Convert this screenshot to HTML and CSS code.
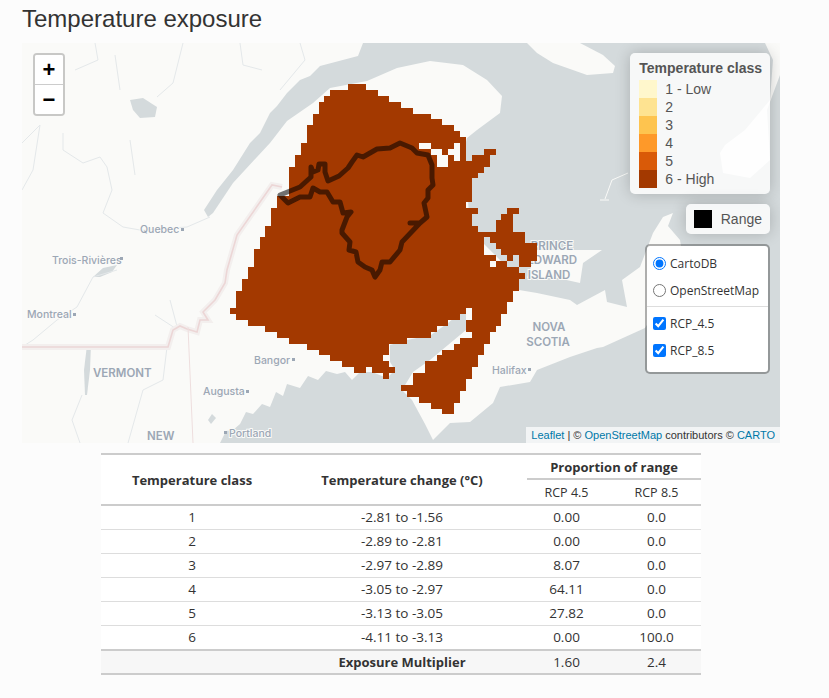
FILE: index.html
```html
<!DOCTYPE html>
<html lang="en">
  <head>
    <meta charset="UTF-8" />
    <meta name="viewport" content="width=device-width, initial-scale=1.0" />
    <title>Temperature exposure</title>
    <link rel="stylesheet" href="styles.css">
  </head>
  <body>
    <h2 class="page-title">Temperature exposure</h2>

    <div class="map">
      <svg class="map-canvas" viewBox="22 43 758 400" width="758" height="400">
        <!-- land -->
        <path class="land" d="M22 43H363L358 56L320 66L310 76L300 80L287 93L277 106L270 113L260 133L250 143L233 170L217 190L204 210L208 217L213 213L233 183L257 157L270 143L287 121L313 103L330 88L367 81L397 68L430 61L463 65L487 80L502 96L500 113L477 130L467 138L464 150L468 200L470 230L490 250L515 275L519 290L466 308L448 323L431 335L407 340L390 345L390 362L395 370L387 378L372 372L360 372L352 380L345 372L337 374L326 371L318 380L308 376L300 388L287 384L283 396L276 392L270 407L262 404L253 414L246 412L240 424L233 430L226 431L220 443H22Z" />
        <path class="land" d="M466 308L519 290L537 293L570 300L577 305L605 290L607 302L627 307L622 280L640 267L653 233L663 217L673 213L668 226L680 240L690 300L650 320L645 328L603 347L597 348L570 357L537 370L530 382L500 387L493 403L470 422L450 423L433 440L425 424L412 400L402 390L413 372L430 360L448 345L466 330Z" />
        <path class="land" d="M527 43L537 53L553 63L587 75L613 73L615 66L603 55L580 43Z" />
        <path class="land" d="M537 250L602 250L583 263L580 283L553 277L527 278Z" />
        <path class="land" d="M765 43L773 60L770 100L745 130L725 145L720 153L723 173L750 178L770 160L767 110L780 75V43Z" />
        <path class="islet" d="M628 173L612 180L605 199" />
        <path class="islet" d="M600 200H609" />
        <!-- lakes and rivers -->
        <path class="water" d="M130 100L143 98L157 107L155 117L140 118L133 110Z" />
        <path class="water" d="M93 277L103 268L117 265L112 272L100 277Z" />
        <path class="water" d="M87 345L91 344L90 370L87 395L85 395L84 370Z" />
        <path class="water" d="M212 414L216 418L211 424L208 420Z" />
        <path class="river" d="M157 97L173 83L183 43" />
        <path class="river" d="M63 133L63 150L83 163L100 157L107 167L112 190L103 213L123 227L140 230L187 227L210 217" />
        <path class="river" d="M117 270L93 277L77 307L57 320L33 340L22 347" />
        <path class="river" d="M167 347L163 380L143 390L128 443" />
        <path class="river" d="M82 395L72 420L80 443" />
        <path class="river" d="M22 143L40 125L33 170L22 190" />
        <path class="river" d="M95 43L98 60L75 70M115 55L120 90M130 140L135 175" />
        <path class="river" d="M155 315L178 330L170 300" />
        <path class="river" d="M300 43L305 60L280 90M240 43L243 65L262 70" />
        <!-- borders -->
        <path class="border-halo" d="M22 347H168L173 330L180 326L187 329L197 332L200 320L208 320L203 312L215 300L225 283L227 270L237 235L272 185L282 187" />
        <path class="border" d="M22 347H168L173 330L180 326L187 329L197 332L200 320L208 320L203 312L215 300L225 283L227 270L237 235L272 185L282 187" />
        <path class="border-thin" d="M188 327L193 443" />
        <!-- place labels -->
        <text class="place" x="140" y="233">Quebec</text>
        <text class="place" x="52" y="264">Trois-Rivières</text>
        <text class="place" x="27" y="318">Montreal</text>
        <text class="place" x="203" y="395">Augusta</text>
        <text class="place" x="229" y="437">Portland</text>
        <text class="place" x="254" y="364">Bangor</text>
        <text class="place" x="492" y="374">Halifax</text>
        <text class="region" x="93" y="377">VERMONT</text>
        <text class="region" x="147" y="440">NEW</text>
        <text class="region" x="549" y="331" text-anchor="middle">NOVA</text>
        <text class="region" x="548" y="346" text-anchor="middle">SCOTIA</text>
        <text class="region" x="552" y="250" text-anchor="middle">PRINCE</text>
        <text class="region" x="552" y="264" text-anchor="middle">EDWARD</text>
        <text class="region" x="549" y="279" text-anchor="middle">ISLAND</text>
        <path class="place-dot" d="M181 228h3v3h-3zM120 257h3v3h-3zM73 313h3v3h-3zM246 390h3v3h-3zM224 431h3v3h-3zM292 358h3v3h-3zM528 368h3v3h-3z" />
        <!-- class 6 raster, one row per line, in grid cells -->
        <path class="raster" transform="translate(230 84) scale(5.9)" d="
          M20 0H23V1H20Z
          M17 1H25V2H17Z
          M16 2H27V3H16Z
          M15 3H29V4H15Z
          M15 4H31V5H15Z
          M14 5H34V6H14Z
          M14 6H36V7H14Z
          M13 7H38V8H13Z
          M13 8H39V9H13Z
          M13 9H40V10H13Z
          M12 10H32V11H12Z M34 10H38V11H34Z M39 10H40V11H39Z
          M12 11H34V12H12Z M36 11H37V12H36Z M39 11H40V12H39Z M43 11H45V12H43Z
          M11 12H35V13H11Z M37 12H38V13H37Z M39 12H40V13H39Z M41 12H44V13H41Z
          M11 13H35V14H11Z M37 13H44V14H37Z
          M10 14H43V15H10Z
          M10 15H42V16H10Z
          M10 16H41V17H10Z
          M10 17H41V18H10Z
          M10 18H41V19H10Z
          M8 19H41V20H8Z
          M8 20H40V21H8Z
          M7 21H42V22H7Z M47 21H49V22H47Z
          M7 22H41V23H7Z M46 22H48V23H46Z
          M7 23H41V24H7Z M45 23H48V24H45Z
          M6 24H42V25H6Z M45 24H48V25H45Z
          M6 25H50V26H6Z
          M5 26H43V27H5Z M44 26H50V27H44Z
          M5 27H43V28H5Z M45 27H52V28H45Z
          M4 28H43V29H4Z M46 28H52V29H46Z
          M4 29H45V30H4Z M47 29H48V30H47Z M49 29H52V30H49Z
          M4 30H44V31H4Z M45 30H47V31H45Z M49 30H51V31H49Z
          M3 31H49V32H3Z
          M3 32H50V33H3Z
          M2 33H49V34H2Z
          M2 34H49V35H2Z
          M1 35H48V36H1Z
          M1 36H48V37H1Z
          M1 37H47V38H1Z
          M0 38H40V39H0Z M41 38H47V39H41Z
          M1 39H39V40H1Z M41 39H46V40H41Z
          M3 40H37V41H3Z M40 40H46V41H40Z
          M6 41H35V42H6Z M40 41H45V42H40Z
          M8 42H34V43H8Z M41 42H44V43H41Z
          M10 43H30V44H10Z M39 43H44V44H39Z
          M13 44H27V45H13Z M38 44H43V45H38Z
          M15 45H27V46H15Z M36 45H43V46H36Z
          M17 46H26V47H17Z M35 46H42V47H35Z
          M19 47H27V48H19Z M33 47H42V48H33Z
          M21 48H23V49H21Z M24 48H28V49H24Z M33 48H41V49H33Z
          M26 49H27V50H26Z M31 49H41V50H31Z
          M31 50H40V51H31Z
          M29 51H40V52H29Z
          M30 52H39V53H30Z
          M32 53H39V54H32Z
          M34 54H38V55H34Z
          M36 55H38V56H36Z" />
        <!-- range outline -->
        <path class="range-line" d="M280 195L300 187L311 177L311 167L313 172L318 170L319 164L325 164L325 172L328 181L339 176L348 168L352 162L357 155L363 157L377 149L390 148L400 143L412 148L417 153L428 155L432 165L432 178L433 185L428 190L428 198L424 203L427 217L420 223L410 223L420 223L402 242L400 250L390 262L382 262L380 270L375 277L372 270L365 267L358 262L356 252L349 250L350 242L342 233L342 230L347 217L351 212L343 213L340 202L333 202L327 192L320 192L313 188L310 197L300 197L288 203Z" />
      </svg>

      <div class="zoom-control">
        <a class="zoom-btn">+</a>
        <a class="zoom-btn">−</a>
      </div>

      <div class="map-side">
        <div class="legend">
          <div class="legend-title">Temperature class</div>
          <div class="legend-row"><i class="swatch c1"></i>1 - Low</div>
          <div class="legend-row"><i class="swatch c2"></i>2</div>
          <div class="legend-row"><i class="swatch c3"></i>3</div>
          <div class="legend-row"><i class="swatch c4"></i>4</div>
          <div class="legend-row"><i class="swatch c5"></i>5</div>
          <div class="legend-row"><i class="swatch c6"></i>6 - High</div>
        </div>
        <div class="legend legend-range">
          <i class="swatch range-swatch"></i>Range
        </div>
        <form class="layers">
          <label class="layer-row"><input type="radio" name="base" checked>CartoDB</label>
          <label class="layer-row"><input type="radio" name="base">OpenStreetMap</label>
          <div class="layers-sep"></div>
          <label class="layer-row"><input type="checkbox" checked>RCP_4.5</label>
          <label class="layer-row"><input type="checkbox" checked>RCP_8.5</label>
        </form>
      </div>

      <div class="attribution">
        <a>Leaflet</a> | © <a>OpenStreetMap</a> contributors © <a>CARTO</a>
      </div>
    </div>

    <table class="exposure">
      <colgroup>
        <col class="col-class">
        <col class="col-change">
        <col class="col-rcp45">
        <col class="col-rcp85">
      </colgroup>
      <thead>
        <tr class="head-top">
          <th rowspan="2">Temperature class</th>
          <th rowspan="2">Temperature change (°C)</th>
          <th colspan="2" class="group"><div class="group-label">Proportion of range</div></th>
        </tr>
        <tr class="head-sub">
          <td>RCP 4.5</td>
          <td>RCP 8.5</td>
        </tr>
      </thead>
      <tbody>
        <tr><td>1</td><td>-2.81 to -1.56</td><td>0.00</td><td>0.0</td></tr>
        <tr><td>2</td><td>-2.89 to -2.81</td><td>0.00</td><td>0.0</td></tr>
        <tr><td>3</td><td>-2.97 to -2.89</td><td>8.07</td><td>0.0</td></tr>
        <tr><td>4</td><td>-3.05 to -2.97</td><td>64.11</td><td>0.0</td></tr>
        <tr><td>5</td><td>-3.13 to -3.05</td><td>27.82</td><td>0.0</td></tr>
        <tr><td>6</td><td>-4.11 to -3.13</td><td>0.00</td><td>100.0</td></tr>
      </tbody>
      <tfoot>
        <tr><td></td><th>Exposure Multiplier</th><td>1.60</td><td>2.4</td></tr>
      </tfoot>
    </table>
  </body>
</html>
```

FILE: styles.css
```css
body {
  margin: 0;
  background-color: #fcfcfc;
  color: #333;
  font-family: "Liberation Sans", Arial, sans-serif;
}

.page-title {
  margin: 0;
  padding: 6px 0 0 22px;
  height: 43px;
  box-sizing: border-box;
  font-size: 24px;
  font-weight: 400;
  line-height: 26px;
}

/* map */
.map {
  position: relative;
  width: 758px;
  height: 400px;
  margin-left: 22px;
  overflow: hidden;
}
.map-canvas {
  display: block;
  background-color: #d4dadc;
}
.land {
  fill: #fafaf8;
}
.islet {
  fill: none;
  stroke: #fafaf8;
  stroke-width: 1;
}
.water {
  fill: #d4dadc;
}
.river {
  fill: none;
  stroke: #e4e8ea;
  stroke-width: 1;
}
.border-halo {
  fill: none;
  stroke: #f3efee;
  stroke-width: 6;
}
.border {
  fill: none;
  stroke: #ecd6d6;
  stroke-width: 1.6;
}
.border-thin {
  fill: none;
  stroke: #eedede;
  stroke-width: 1;
}
.place,
.region {
  fill: #9ca7b5;
  font-family: Inter, "Open Sans", sans-serif;
  font-weight: 500;
  paint-order: stroke;
  stroke: #fafaf8;
  stroke-width: 2px;
}
.place {
  font-size: 10.5px;
}
.region {
  font-size: 11.5px;
  font-weight: 600;
}
.place-dot {
  fill: #9ca7b5;
}
.raster {
  fill: #a33900;
  shape-rendering: crispEdges;
}
.range-line {
  fill: none;
  stroke: #000;
  stroke-opacity: 0.55;
  stroke-width: 5;
  stroke-linejoin: round;
  stroke-linecap: round;
}

/* leaflet style controls */
.zoom-control {
  position: absolute;
  top: 10px;
  left: 11px;
  border: 2px solid rgba(0, 0, 0, 0.2);
  border-radius: 4px;
  background-clip: padding-box;
}
.zoom-btn {
  display: block;
  width: 28px;
  height: 29px;
  background-color: #fff;
  color: #000;
  font: bold 22px/29px "Liberation Sans", Arial, sans-serif;
  text-align: center;
}
.zoom-btn:first-child {
  border-bottom: 1px solid #ccc;
  border-radius: 2px 2px 0 0;
}
.zoom-btn:last-child {
  border-radius: 0 0 2px 2px;
}

.map-side {
  position: absolute;
  top: 10px;
  right: 10px;
  display: flex;
  flex-direction: column;
  align-items: flex-end;
  gap: 10px;
}
.legend {
  padding: 6px 8px 6px 8px;
  border-radius: 5px;
  background-color: rgba(255, 255, 255, 0.8);
  box-shadow: 0 0 15px rgba(0, 0, 0, 0.2);
  color: #555;
  font-size: 14px;
  line-height: 18px;
}
.legend-title {
  padding: 0 0 3px 1px;
  font-weight: bold;
}
.legend-row {
  display: flex;
  height: 18px;
  padding-left: 1px;
}
.swatch {
  flex: none;
  display: block;
  width: 18px;
  height: 18px;
  margin-right: 8px;
}
.c1 { background-color: #fff7cc; }
.c2 { background-color: #fee391; }
.c3 { background-color: #fec44f; }
.c4 { background-color: #fe9929; }
.c5 { background-color: #d95a08; }
.c6 { background-color: #a33900; }
.legend-range {
  display: flex;
  align-items: center;
  padding: 6px 8px;
}
.range-swatch {
  margin-right: 9px;
  background-color: #000;
}

.layers {
  box-sizing: border-box;
  width: 125px;
  height: 130px;
  margin: 0;
  padding: 4px 6px;
  border: 2px solid rgba(0, 0, 0, 0.3);
  border-radius: 5px;
  background-color: #fff;
  background-clip: padding-box;
  color: #333;
  font-family: "Open Sans", sans-serif;
  font-size: 12px;
  font-weight: 500;
}
.layer-row {
  display: flex;
  align-items: center;
  height: 27px;
  white-space: nowrap;
}
.layer-row input {
  width: 13px;
  height: 13px;
  margin: 0 4px 0 0;
}
.layers-sep {
  height: 1px;
  margin: 2px -6px 3px;
  background-color: #ddd;
}

.attribution {
  position: absolute;
  right: 0;
  bottom: 0;
  padding: 0 5px;
  background-color: rgba(255, 255, 255, 0.7);
  color: #333;
  font-size: 11px;
  line-height: 16px;
}
.attribution a {
  color: #0078a8;
}

/* table */
.exposure {
  width: 600px;
  margin: 10px 0 0 101px;
  border-collapse: collapse;
  table-layout: fixed;
  background-color: #fff;
  font-family: "Open Sans", sans-serif;
  font-size: 13.5px;
  text-align: center;
}
.col-class { width: 182px; }
.col-change { width: 238px; }
.col-rcp45 { width: 91px; }
.col-rcp85 { width: 89px; }
.exposure th,
.exposure td {
  padding: 0;
}
.exposure th {
  font-size: 13px;
  font-weight: 700;
}
.exposure thead {
  border-top: 2px solid #ccc;
  border-bottom: 2px solid #ccc;
}
.head-top {
  height: 25px;
}
.head-sub {
  height: 25px;
}
.head-sub td {
  font-size: 12.5px;
}
.group-label {
  height: 23px;
  margin-left: 6px;
  border-bottom: 2px solid #ccc;
  line-height: 24px;
}
.exposure .group {
  vertical-align: top;
}
.exposure tbody tr {
  height: 24px;
  border-bottom: 1px solid #ddd;
}
.exposure tbody tr:last-child {
  height: 25px;
  border-bottom: none;
}
.exposure tfoot {
  border-top: 2px solid #ccc;
  border-bottom: 2px solid #ccc;
  background-color: #f7f7f7;
}
.exposure tfoot tr {
  height: 24px;
}
```
